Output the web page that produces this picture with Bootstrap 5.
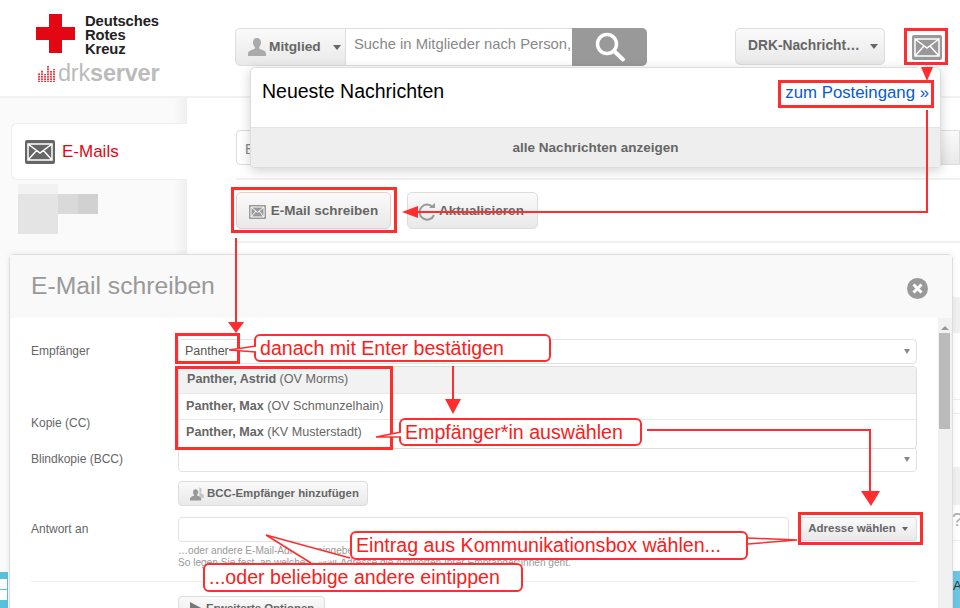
<!DOCTYPE html>
<html lang="de">
<head>
<meta charset="utf-8">
<title>E-Mail schreiben</title>
<link rel="stylesheet" href="https://cdn.jsdelivr.net/npm/bootstrap@5.3.0/dist/css/bootstrap.min.css">
<style>
html,body{height:608px;overflow:hidden;background:#fff}
body{font-family:"Liberation Sans",Arial,sans-serif;color:#666;font-size:12px}
.stage{position:relative;width:960px;height:608px;overflow:hidden}
.top-bar{height:98px;border-bottom:2px solid #f1f1f1}
.logo-area{width:235px;flex:none;padding:14px 0 0 36px}
.cross{width:39px;height:39px;flex:none}
.logo-words{font-size:14.8px;line-height:14px;font-weight:700;color:#222;margin-left:10px;letter-spacing:-.1px}
.server-line{margin-top:7px;margin-left:2px;height:20px}
.server-word{font-size:23.500px;line-height:20px;color:#bbb;margin-left:3px;letter-spacing:-.2px}
.server-word b{font-weight:700}
.soft-btn{background:linear-gradient(#fafafa,#e9e9e9);border:1px solid #ddd;color:#666;font-weight:700;font-family:inherit}
.soft-btn:hover{color:#666}
.tri{display:inline-block;width:0;height:0;border-left:4px solid transparent;border-right:4px solid transparent;border-top:5px solid #666}
.search-wrap{width:412px;height:38px;margin-top:28px}
.member-btn{width:111px;height:38px;padding:0 0 0 12px;font-size:13.700px;border-radius:5px 0 0 5px;gap:3px}
.search-field{width:226px;height:38px;border:1px solid #ddd;border-left:0;border-right:0;padding:0 0 5px 8px;font-size:14.800px;color:#888;white-space:nowrap;overflow:hidden;background:#fff}
.search-go{width:75px;height:38px;background:#999;border-radius:0 5px 5px 0}
.msg-select{width:150px;height:37px;margin:28px 0 0 88px;font-size:13.800px;padding:0 6px 0 12px;border-radius:5px}
.mail-top{margin:35px 0 0 27px;width:30px;height:25px}
.side-col{width:187px;flex:none;height:510px;background:linear-gradient(90deg,#fafafa 93%,#efefef);padding-top:25px}
.tab-item{margin-left:11px;height:57px;background:#fff;border:1px solid #eee;border-right:0;border-radius:6px 0 0 6px;padding-left:13px;gap:7px;font-size:17px;color:#e30613}
.blur-grid{display:grid;grid-template-columns:repeat(4,20px);grid-template-rows:10px 20px 20px;width:80px;margin:4px 0 0 18px}
.bt1{background:#f2f2f2}
.bt2{background:#e4e4e4}
.bt3{background:#d9d9d9}
.bt4{background:#d1d1d1}
.side-alert{height:36px;background:#5bc0de;margin-top:338px;width:8px;padding-top:7px}
.side-square{height:10px;width:7px;background:#fff;margin-bottom:1px}
.main-col{min-width:0;padding:32px 0 0 49px}
.filter-row{height:35px}
.filter-input{width:120px;border:1px solid #ddd;border-radius:4px;font-size:14px;padding:8px;color:#888}
.filter-btn{margin-left:auto;width:90px;border:1px solid #ddd;border-radius:4px 0 0 4px;font-weight:700;font-size:14px;padding:8px 0 0 8px}
.rule-line{border-top:2px solid #f1f1f1;height:0;margin-top:13px}
.action-row{margin-top:12px;height:37px;gap:16px}
.action-btn{height:37px;font-size:13.500px;padding:2px 0 0;border-radius:5px;gap:5px}
.compose-btn{width:155px;border-color:#f3c9c9}
.refresh-btn{width:131px;gap:2px;padding-right:4px}
.rule-two{margin-top:12px}
.strip-stack{margin-left:auto;width:8px}
.strip-block{height:36px;background:#f0f0f0;margin-top:54px}
.strip-line{border-top:1px solid #eee;margin-top:66px;height:15px;border-bottom:1px solid #eee}
.strip-band{height:38px;background:#f0f0f0;margin-top:53px}
.strip-q{height:36px;border-bottom:1px solid #eee;font-size:19px;line-height:30px;color:#aaa;overflow:hidden;white-space:nowrap}
.strip-alert{height:37px;background:#6cc5e4;margin-top:30px;font-size:13px;line-height:30px;color:#333;overflow:hidden;padding-left:1px}
.pop-panel{position:absolute;left:250px;top:67px;width:691px;height:101px;background:#fff;border:1px solid #ddd;border-radius:5px;box-shadow:0 3px 12px rgba(0,0,0,.18);z-index:5}
.pop-panel::before{content:"";position:absolute;left:667px;top:-5px;width:9px;height:9px;background:#fff;border-left:1px solid #ddd;border-top:1px solid #ddd;transform:rotate(45deg)}
.pop-head{height:59px;padding:12px 11px 0}
.pop-title{font-size:19.500px;color:#000;line-height:22px}
.pop-link{font-size:16.800px;color:#0a5ad0;margin:3px 0 0 0;line-height:20px;text-decoration:none}
.pop-foot{height:40px;background:#eee;border-top:1px solid #e4e4e4;border-radius:0 0 5px 5px;font-size:13.500px;font-weight:700;color:#666;padding-top:12px;text-align:center;line-height:16px}
.compose-win{position:absolute;left:9px;top:254px;width:944px;height:420px;border:1px solid #ddd;border-radius:5px 5px 0 0;background:#fff;z-index:3;box-shadow:0 0 6px rgba(0,0,0,.08)}
.win-head{height:63px;background:#f9f9f9;padding:0 21px}
.win-title{font-size:24.700px;color:#999;line-height:63px;margin-top:-1px}
.close-x{width:21px;height:21px;margin:23px 3px 0 0}
.win-form{width:928px;flex:none;padding:21px 21px 0 21px;font-size:12px}
.scroll-rail{width:14px;flex:none;background:#f1f1f1;height:360px;padding:8px 2px 0 1px}
.scroll-up{width:0;height:0;border-left:4px solid transparent;border-right:4px solid transparent;border-bottom:4px solid #999;margin:0 auto 3px}
.scroll-thumb{height:96px;background:#bbb}
.form-line{height:24px}
.form-tag{width:147px;flex:none;line-height:24px;font-size:12px;color:#666}
.fake-input{height:25px;flex:1;border:1px solid #e2e2e2;border-radius:4px;background:#fff;font-size:12.500px;line-height:23px;padding-left:6px;color:#555}
.field-tri{border-left-width:3.500px;border-right-width:3.500px;border-top-color:#888;margin:9px 6px 0 auto}
.addr-tri{border-left-width:3.500px;border-right-width:3.500px;border-top-width:4px}
.pick-list{position:absolute;left:147px;right:0;top:27px;border:1px solid #ddd;border-radius:4px;background:#fff;z-index:2}
.pick-list .list-group-item{height:26px;padding:0 0 0 7px;line-height:25px;font-size:12.600px;color:#666;border:0;border-bottom:1px solid #e8e8e8;background:transparent;white-space:nowrap}
.pick-list .list-group-item:first-child{background:#f2f2f2;padding-left:8px;height:27px}
.pick-list .list-group-item:last-child{border-bottom:0;height:28px}
.line-kopie{margin-top:48px}
.line-bcc{margin-top:12px}
.small-btn{height:25px;padding:0 0 0 11px;width:190px;font-size:11.400px;border-radius:4px;gap:3px;margin:10px 0 0 147px;line-height:23px;white-space:nowrap}
.line-reply{margin-top:11px}
.addr-btn{width:118px;height:24px;margin-left:10px;padding:0;font-size:11.500px;border-radius:3px;gap:6px}
.help-text{font-size:10.100px;line-height:12px;color:#999;margin:4px 0 0 147px;white-space:nowrap}
.form-rule{border-top:1px solid #eee;margin-top:12px}
.more-btn{margin-top:14px;width:147px;justify-content:flex-start}
.red-box{position:absolute;border:3px solid #ff2d2d;z-index:8}
.note{position:absolute;border:2px solid #ff2d2d;border-radius:6px;background:#fff;color:#f92020;font-size:19.600px;line-height:24px;padding-left:4px;white-space:nowrap;z-index:10}
.lines{position:absolute;inset:0;z-index:9;pointer-events:none}
.tails{position:absolute;inset:0;z-index:11;pointer-events:none}
</style>
</head>
<body>
<div class="stage">
  <header class="top-bar d-flex">
    <div class="logo-area">
      <div class="d-flex">
        <svg class="cross" viewBox="0 0 39 39"><path fill="#e30613" d="M13 0h13v13h13v13H26v13H13V26H0V13h13z"/></svg>
        <div class="logo-words">Deutsches<br>Rotes<br>Kreuz</div>
      </div>
      <div class="server-line d-flex align-items-center">
        <svg width="17" height="17" viewBox="0 0 17 17"><g fill="#e8424a"><rect x="0" y="8" width="2" height="9"/><rect x="3" y="5" width="2" height="12"/><rect x="6" y="9" width="2" height="8"/><rect x="9" y="1" width="2" height="16"/><rect x="12" y="6" width="2" height="11"/><rect x="15" y="4" width="2" height="13"/></g><g stroke="#fff" stroke-width=".7"><path d="M0 3h17M0 5.500h17M0 8h17M0 10.500h17M0 13h17M0 15.500h17"/></g></svg>
        <div class="server-word">drk<b>server</b></div>
      </div>
    </div>
    <div class="search-wrap d-flex">
      <button class="btn soft-btn member-btn d-flex align-items-center" type="button">
        <svg width="18" height="18" viewBox="0 0 18 18"><path fill="#aaa" d="M9 0c2.600 0 4 2 4 4.600 0 2-1 3.600-1.800 4.400v1.800c2 .8 5.800 1.700 6.800 4.200v3H0v-3c1-2.500 4.800-3.400 6.800-4.200V9C6 8.200 5 6.600 5 4.600 5 2 6.400 0 9 0z"/></svg>
        <span>Mitglied</span><span class="tri ms-auto me-1"></span>
      </button>
      <div class="search-field d-flex align-items-center">Suche in Mitglieder nach Person,</div>
      <div class="search-go d-flex align-items-center justify-content-center">
        <svg width="32" height="32" viewBox="0 0 32 32"><circle cx="13" cy="13" r="9.500" fill="none" stroke="#fff" stroke-width="3.500"/><path d="M20 20l9 8.500" stroke="#fff" stroke-width="4" stroke-linecap="round"/></svg>
      </div>
    </div>
    <button class="btn soft-btn msg-select d-flex align-items-center" type="button"><span>DRK-Nachricht…</span><span class="tri ms-auto"></span></button>
    <svg class="mail-top" viewBox="0 0 30 25"><rect width="30" height="25" rx="2" fill="#999"/><path d="M3 4h24v17H3zM3 4l12 9 12-9M3 21l9-10M27 21l-9-10" fill="none" stroke="#fff" stroke-width="1.500"/></svg>
  </header>
  <div class="d-flex">
    <aside class="side-col">
      <div class="tab-item d-flex align-items-center">
        <svg width="30" height="24" viewBox="0 0 30 24"><rect width="30" height="24" rx="2" fill="#666"/><path d="M3 4h24v16H3zM3 4l12 9 12-9M3 20l9-10M27 20l-9-10" fill="none" stroke="#fff" stroke-width="1.500"/></svg>
        <span>E-Mails</span>
      </div>
      <div class="blur-grid">
        <div class="bt1"></div><div class="bt1"></div><div></div><div></div>
        <div class="bt2"></div><div class="bt2"></div><div class="bt3"></div><div class="bt4"></div>
        <div class="bt2"></div><div class="bt2"></div><div></div><div></div>
      </div>
      <div class="side-alert"><div class="side-square"></div><div class="side-square"></div></div>
    </aside>
    <main class="main-col flex-grow-1">
      <div class="filter-row d-flex"><div class="filter-input">E</div><div class="filter-btn soft-btn">Ausgang</div></div>
      <div class="rule-line"></div>
      <div class="action-row d-flex">
        <button class="btn soft-btn action-btn compose-btn d-flex align-items-center justify-content-center" type="button">
          <svg width="17" height="14" viewBox="0 0 17 14"><rect width="17" height="14" rx="1" fill="#999"/><path d="M2 2h13v10H2zM2 2l6.500 5.500L15 2M2 12l5-6M15 12l-5-6" fill="none" stroke="#fff"/></svg>
          <span>E-Mail schreiben</span></button>
        <button class="btn soft-btn action-btn refresh-btn d-flex align-items-center justify-content-center" type="button">
          <svg width="20" height="18" viewBox="0 0 20 18"><path d="M16 4.500A7.500 7.500 0 1 0 17 12" fill="none" stroke="#999" stroke-width="2"/><path d="M12 5h6V0z" fill="#999"/></svg>
          <span>Aktualisieren</span></button>
      </div>
      <div class="rule-line rule-two"></div>
      <div class="strip-stack">
        <div class="strip-block"></div>
        <div class="strip-line"></div>
        <div class="strip-band"></div>
        <div class="strip-q">?</div>
        <div class="strip-alert">A</div>
      </div>
    </main>
  </div>

  <div class="pop-panel">
    <div class="pop-head d-flex justify-content-between align-items-start">
      <div class="pop-title">Neueste Nachrichten</div>
      <a class="pop-link" href="#">zum Posteingang »</a>
    </div>
    <div class="pop-foot">alle Nachrichten anzeigen</div>
  </div>

  <section class="compose-win">
    <div class="win-head d-flex justify-content-between">
      <div class="win-title">E-Mail schreiben</div>
      <svg class="close-x" viewBox="0 0 21 21"><circle cx="10.500" cy="10.500" r="10.500" fill="#999"/><path d="M6.500 6.500l8 8M14.500 6.500l-8 8" stroke="#fff" stroke-width="3"/></svg>
    </div>
    <div class="d-flex">
      <div class="win-form">
        <div class="form-line d-flex position-relative">
          <div class="form-tag">Empfänger</div>
          <div class="fake-input d-flex">Panther<span class="tri field-tri"></span></div>
          <div class="pick-list list-group">
            <div class="list-group-item"><b>Panther, Astrid</b> (OV Morms)</div>
            <div class="list-group-item"><b>Panther, Max</b> (OV Schmunzelhain)</div>
            <div class="list-group-item"><b>Panther, Max</b> (KV Musterstadt)</div>
          </div>
        </div>
        <div class="form-line line-kopie d-flex">
          <div class="form-tag">Kopie (CC)</div>
          <div class="fake-input"></div>
        </div>
        <div class="form-line line-bcc d-flex">
          <div class="form-tag">Blindkopie (BCC)</div>
          <div class="fake-input d-flex"><span class="tri field-tri"></span></div>
        </div>
        <button class="btn soft-btn small-btn d-inline-flex align-items-center" type="button">
          <svg width="14" height="14" viewBox="0 0 15 14"><path fill="#c4c4c4" d="M10 0c1.600 0 2.500 1.200 2.500 2.700 0 1-.5 2-1 2.500v1c1.200.5 2.700 1 3.500 2.300V11H10V0z"/><path fill="#999" d="M6 2c1.800 0 2.800 1.300 2.800 3 0 1.200-.6 2.300-1.100 2.800V9c1.400.5 3.300 1 4.300 2.600V14H0v-2.400C1 10 2.900 9.500 4.300 9V7.800C3.800 7.300 3.200 6.200 3.200 5 3.200 3.300 4.200 2 6 2z"/></svg>
          <span>BCC-Empfänger hinzufügen</span></button>
        <div class="form-line line-reply d-flex">
          <div class="form-tag">Antwort an</div>
          <div class="fake-input"></div>
          <button class="btn soft-btn addr-btn d-flex align-items-center justify-content-center" type="button"><span>Adresse wählen</span><span class="tri addr-tri"></span></button>
        </div>
        <div class="help-text">…oder andere E-Mail-Adresse eingeben<br>So legen Sie fest, an welche E-Mail-Adresse die Antworten Ihrer Empfänger*innen geht.</div>
        <div class="form-rule"></div>
        <button class="btn soft-btn small-btn more-btn d-flex align-items-center" type="button">
          <svg width="13" height="14" viewBox="0 0 13 14"><path fill="#777" d="M0 0l13 7-13 7z"/></svg>
          <span>Erweiterte Optionen</span></button>
      </div>
      <div class="scroll-rail"><div class="scroll-up"></div><div class="scroll-thumb"></div></div>
    </div>
  </section>

  <svg class="lines" viewBox="0 0 960 608" width="960" height="608">
    <g fill="none" stroke="#ff2d2d" stroke-width="2">
      <path d="M927 110V212H412"/>
      <path d="M236 238V322"/>
      <path d="M453 366V404"/>
      <path d="M647 430H870V494"/>
    </g>
    <g fill="#ff2d2d">
      <path d="M921 67h12l-6 14z"/>
      <path d="M402 212l16-6v12z"/>
      <path d="M228 322h16l-8 11z"/>
      <path d="M445 399h16l-8 15z"/>
      <path d="M861 491h19l-9 15z"/>
    </g>
  </svg>
  <div class="red-box" style="left:904px;top:28px;width:44px;height:37px"></div>
  <div class="red-box" style="left:778px;top:80px;width:156px;height:28px"></div>
  <div class="red-box" style="left:231px;top:187px;width:166px;height:46px"></div>
  <div class="red-box" style="left:175px;top:333px;width:65px;height:31px"></div>
  <div class="red-box" style="left:175px;top:366px;width:218px;height:84px"></div>
  <div class="red-box" style="left:798px;top:512px;width:125px;height:33px"></div>

  <div class="note" style="left:254px;top:334px;width:297px;height:28px">danach mit Enter bestätigen</div>
  <div class="note" style="left:399px;top:418px;width:243px;height:28px">Empfänger*in auswählen</div>
  <div class="note" style="left:203px;top:563px;width:320px;height:29px">...oder beliebige andere eintippen</div>
  <div class="note" style="left:350px;top:531px;width:398px;height:29px">Eintrag aus Kommunikationsbox wählen...</div>
  <svg class="tails" viewBox="0 0 960 608" width="960" height="608">
    <g fill="#fff" stroke="#ff2d2d" stroke-width="1.500" stroke-linejoin="miter">
      <path d="M256 346L229 350L256 352"/>
      <path d="M401 432L376 437L401 437"/>
      <path d="M748 538L797 540L748 544"/>
      <path d="M311 563L266 535L350 558"/>
    </g>
  </svg>
</div>
<script src="https://cdn.jsdelivr.net/npm/bootstrap@5.3.0/dist/js/bootstrap.bundle.min.js"></script>
</body>
</html>
